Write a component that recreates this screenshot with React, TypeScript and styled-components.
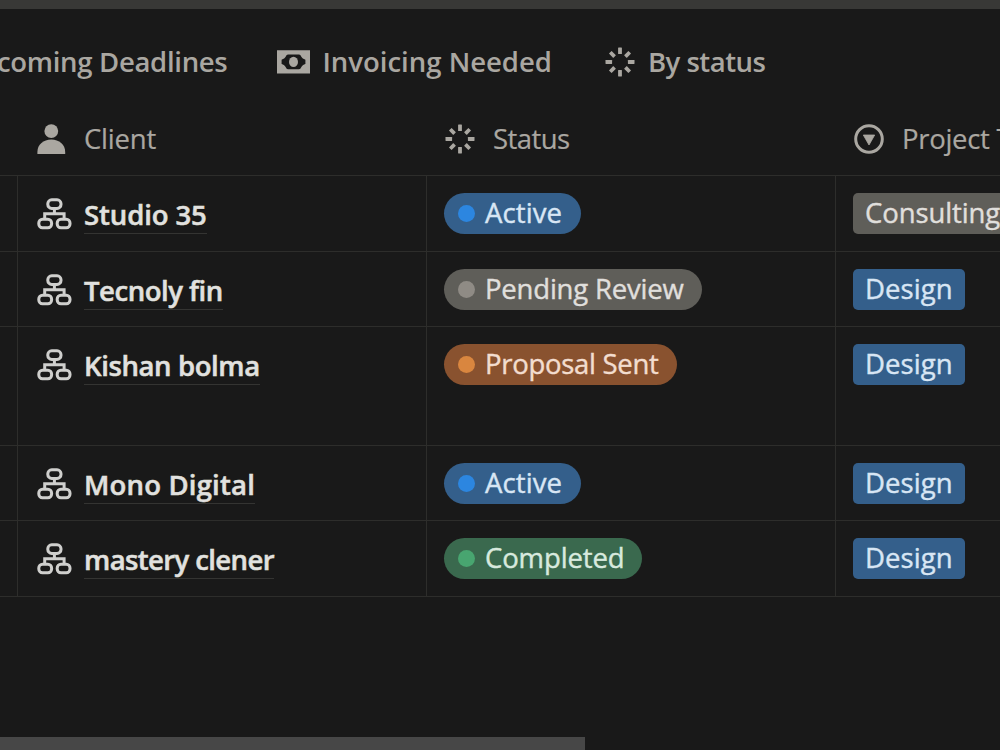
import React from "react";
import styled, { createGlobalStyle } from "styled-components";

const GlobalStyle = createGlobalStyle`
  * { box-sizing: border-box; }
  body {
    margin: 0;
    background: #191919;
    font-family: "Open Sans", "Noto Sans", sans-serif;
    font-size: 27.5px;
    overflow: hidden;
  }
`;

const LINE = "#2d2d2b";
const MUTED = "#aaa7a1";

const Page = styled.div`
  display: flex;
  flex-direction: column;
  width: 1000px;
  height: 750px;
  overflow: hidden;
`;

const TopEdge = styled.div`
  flex: none;
  height: 9px;
  background: #383836;
`;

const Tabs = styled.nav`
  flex: none;
  display: flex;
  align-items: center;
  height: 93px;
  padding-top: 13px;
  margin-left: -40px;
`;

const Tab = styled.div<{ $gap: number; $after: number; $track: number }>`
  flex: none;
  display: flex;
  align-items: center;
  gap: ${(p) => p.$gap}px;
  margin-right: ${(p) => p.$after}px;
  color: ${MUTED};
  font-weight: 600;
  line-height: 38px;
  letter-spacing: ${(p) => p.$track}px;
  white-space: nowrap;
`;

const GridRow = styled.div<{ $height: number }>`
  flex: none;
  display: grid;
  grid-template-columns: 18px 409px 409px 409px;
  height: ${(p) => p.$height}px;
  border-bottom: 1px solid ${LINE};
`;

const HeaderCell = styled.div<{ $gap: number; $inset: number; $track: number }>`
  display: flex;
  align-items: center;
  gap: ${(p) => p.$gap}px;
  padding-left: ${(p) => p.$inset}px;
  color: ${MUTED};
  line-height: 38px;
  letter-spacing: ${(p) => p.$track}px;
  white-space: nowrap;
  -webkit-text-stroke: 0.2px;
`;

const Cell = styled.div`
  display: flex;
  align-items: flex-start;
  padding: 17px 0 0 17px;
  border-right: 1px solid ${LINE};
`;

const ClientLink = styled.div`
  display: flex;
  align-items: flex-start;
  gap: 12px;
  padding-left: 2px;
`;

const ClientName = styled.span<{ $track: number }>`
  margin-top: 3px;
  height: 38px;
  color: #e1e1df;
  font-weight: 600;
  line-height: 38px;
  letter-spacing: ${(p) => p.$track}px;
  white-space: nowrap;
  border-bottom: 1px solid #343432;
  -webkit-text-stroke: 0.5px;
`;

type Tone = "blue" | "gray" | "orange" | "green";

const tones: Record<Tone, { bg: string; dot: string; text: string }> = {
  blue: { bg: "#345f8b", dot: "#2c86e0", text: "#d8e6f4" },
  gray: { bg: "#5f5e59", dot: "#8f8b85", text: "#e0dfdc" },
  orange: { bg: "#89522f", dot: "#d9863f", text: "#f3ddcf" },
  green: { bg: "#3a694e", dot: "#48a570", text: "#d8e9de" },
};

const Pill = styled.span<{ $tone: Tone; $width: number; $track: number }>`
  display: flex;
  align-items: center;
  gap: 10px;
  width: ${(p) => p.$width}px;
  height: 41px;
  padding: 0 0 1px 14px;
  border-radius: 21px;
  background: ${(p) => tones[p.$tone].bg};
  color: ${(p) => tones[p.$tone].text};
  line-height: 38px;
  letter-spacing: ${(p) => p.$track}px;
  white-space: nowrap;
  -webkit-text-stroke: 0.4px;

  &::before {
    content: "";
    flex: none;
    width: 17px;
    height: 17px;
    margin-top: 1px;
    border-radius: 50%;
    background: ${(p) => tones[p.$tone].dot};
  }
`;

const Tag = styled.span<{ $tone: Tone; $width: number; $track: number }>`
  flex: none;
  width: ${(p) => p.$width}px;
  height: 41px;
  padding-left: 12px;
  border-radius: 5px;
  background: ${(p) => tones[p.$tone].bg};
  color: ${(p) => tones[p.$tone].text};
  line-height: 40px;
  letter-spacing: ${(p) => p.$track}px;
  white-space: nowrap;
  -webkit-text-stroke: 0.4px;
`;

const Footer = styled.div`
  margin-top: auto;
  flex: none;
  height: 13px;
`;

const ScrollThumb = styled.div`
  width: 585px;
  height: 13px;
  background: #474747;
`;

const Icon = styled.svg`
  flex: none;
  display: block;
`;

const BanknoteIcon = () => (
  <Icon width="33" height="24" viewBox="0 0 33 24">
    <path
      fill={MUTED}
      fillRule="evenodd"
      d="M0 .3H33V23.5H0ZM11 4.6C10 4.6 9.3 5.4 8.8 6.6C8 8.2 6.6 9 4.6 9.8V14C6.6 14.8 8 15.6 8.8 17.2C9.3 18.4 10 19.2 11 19.2H22C23 19.2 23.7 18.4 24.2 17.2C25 15.6 26.4 14.8 28.4 14V9.8C26.4 9 25 8.2 24.2 6.6C23.7 5.4 23 4.6 22 4.6Z"
    />
    <ellipse cx="16.5" cy="11.9" rx="4.5" ry="5.2" fill={MUTED} />
  </Icon>
);

const BurstIcon = () => (
  <Icon width="30" height="30" viewBox="-15 -15 30 30">
    {[0, 45, 90, 135, 180, 225, 270, 315].map((a) => (
      <rect
        key={a}
        x="-1.9"
        y={a % 90 ? -13.8 : -14.5}
        width="3.8"
        height={a % 90 ? 6.2 : 6.6}
        rx="0.4"
        fill={MUTED}
        transform={`rotate(${a})`}
      />
    ))}
  </Icon>
);

const PersonIcon = () => (
  <Icon width="29" height="32" viewBox="0 0 29 32">
    <circle cx="14.3" cy="8.1" r="6.9" fill={MUTED} />
    <path d="M.4 31V29C.4 21.5 6.5 16.6 14.3 16.6S28.2 21.5 28.2 29V31Z" fill={MUTED} />
  </Icon>
);

const SelectIcon = () => (
  <Icon width="30" height="30" viewBox="0 0 30 30">
    <circle cx="15" cy="15" r="13.3" fill="none" stroke={MUTED} strokeWidth="3" />
    <path d="M9.3 11H20.7L15 21Z" fill={MUTED} stroke={MUTED} strokeWidth="0.8" strokeLinejoin="round" />
  </Icon>
);

const OrgIcon = () => (
  <Icon width="35" height="41" viewBox="0 0 35 41" fill="none" stroke="#cfcfcd" strokeWidth="3">
    <rect x="10.8" y="6.8" width="13.2" height="8.6" rx="3.9" />
    <rect x="1.8" y="26.2" width="12.8" height="8.6" rx="3.7" />
    <rect x="20.2" y="26.2" width="12.8" height="8.6" rx="3.7" />
    <path d="M17.4 15.4V20.7M7.7 26.2V20.7H27.1V26.2" />
  </Icon>
);

interface Project {
  client: string;
  clientTrack: number;
  status: string;
  statusTone: Tone;
  statusWidth: number;
  statusTrack: number;
  type: string;
  height: number;
}

const projects: Project[] = [
  { client: "Studio 35", clientTrack: -0.1, status: "Active", statusTone: "blue", statusWidth: 137, statusTrack: 0.1, type: "Consulting", height: 76 },
  { client: "Tecnoly fin", clientTrack: -0.47, status: "Pending Review", statusTone: "gray", statusWidth: 258, statusTrack: -0.2, type: "Design", height: 75 },
  { client: "Kishan bolma", clientTrack: -0.39, status: "Proposal Sent", statusTone: "orange", statusWidth: 233, statusTrack: -0.3, type: "Design", height: 119 },
  { client: "Mono Digital", clientTrack: 0.19, status: "Active", statusTone: "blue", statusWidth: 137, statusTrack: 0.1, type: "Design", height: 75 },
  { client: "mastery clener", clientTrack: -0.6, status: "Completed", statusTone: "green", statusWidth: 198, statusTrack: -0.13, type: "Design", height: 76 },
];

export default function App() {
  return (
    <>
      <GlobalStyle />
      <Page>
        <TopEdge />
        <Tabs>
          <Tab $gap={0} $after={50} $track={-0.3}>Upcoming Deadlines</Tab>
          <Tab $gap={12} $after={53} $track={0}><BanknoteIcon />Invoicing Needed</Tab>
          <Tab $gap={13} $after={0} $track={-0.5}><BurstIcon />By status</Tab>
        </Tabs>
        <GridRow $height={74}>
          <span />
          <HeaderCell $inset={19} $gap={18} $track={-0.2}><PersonIcon />Client</HeaderCell>
          <HeaderCell $inset={18} $gap={18} $track={-0.55}><BurstIcon />Status</HeaderCell>
          <HeaderCell $inset={18} $gap={18} $track={-0.3}><SelectIcon />Project Type</HeaderCell>
        </GridRow>
        {projects.map((p) => (
          <GridRow key={p.client} $height={p.height}>
            <Cell />
            <Cell>
              <ClientLink>
                <OrgIcon />
                <ClientName $track={p.clientTrack}>{p.client}</ClientName>
              </ClientLink>
            </Cell>
            <Cell>
              <Pill $tone={p.statusTone} $width={p.statusWidth} $track={p.statusTrack}>{p.status}</Pill>
            </Cell>
            <Cell>
              <Tag
                $tone={p.type === "Design" ? "blue" : "gray"}
                $width={p.type === "Design" ? 112 : 160}
                $track={p.type === "Design" ? 0.1 : -0.1}
              >
                {p.type}
              </Tag>
            </Cell>
          </GridRow>
        ))}
        <Footer><ScrollThumb /></Footer>
      </Page>
    </>
  );
}
